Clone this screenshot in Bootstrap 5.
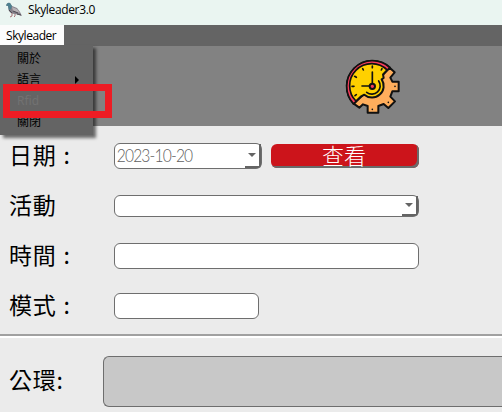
<!DOCTYPE html>
<html lang="zh-Hant">
<head>
<meta charset="utf-8">
<meta name="viewport" content="width=device-width, initial-scale=1">
<title>Skyleader3.0</title>
<link href="https://cdn.jsdelivr.net/npm/bootstrap@5.3.0/dist/css/bootstrap.min.css" rel="stylesheet">
<style>
body{width:502px;height:412px;background:#ebebeb;color:#000;font-family:"Noto Sans","Noto Sans CJK TC",sans-serif;line-height:1}
.title-strip{height:25px;background:#eaf5f1;font-size:12px;padding-left:4px;padding-bottom:5px}
.title-strip span{font-family:"Open Sans","Noto Sans",sans-serif;letter-spacing:-.35px;margin-left:5px}
.menu-strip{height:21px;background:#646464}
.menu-tab{width:64px;height:20px;background:#fcfcfc;font:12px "Open Sans","Noto Sans",sans-serif;letter-spacing:-.45px;padding-left:6px}
.menu-pop{left:0;top:45px;width:93px;height:90px;background:#646464;box-shadow:3px 3px 3px rgba(0,0,0,.55);padding-top:3px;z-index:2;font-size:12px}
.menu-pop>div{height:21px;padding-left:17px;padding-right:14px}
.frame-red{left:3px;top:84px;width:109px;height:34px;border:7px solid #ed1c24;z-index:3}
.menu-pop .off{color:#727272}
.banner{height:80px;background:#828282;padding-left:246px}
.form-area{height:208px;padding:5px 0 0 9px}
.line-row{height:50px}
.cap{width:105px;font:400 23px/1 "Noto Sans CJK TC",sans-serif;letter-spacing:.8px;padding-bottom:4px}
.cap i{font-style:normal;margin-left:7px}
.fld{background:#fff;border:1px solid #6e6e6e;border-radius:6px;height:26px}
.w-s{width:148px}.w-l{width:305px}.w-m{width:145px}
.slim{height:22px}
.datetxt{font:300 18.5px/1 Lato,"Noto Sans",sans-serif;color:#606060;letter-spacing:-1px;padding:0 0 1px 2px;transform:scaleX(.845);transform-origin:0 50%}
.drop{width:16px;align-self:stretch;border-right:2px solid #646464;border-bottom:2px solid #646464;border-bottom-right-radius:3px}
.go{width:148px;height:24px;margin-left:9px;background:#cc141b;color:#fff;border-radius:6px;box-shadow:inset -2px -2px 0 #6a6a6a}
.go span{font:300 22px/1 "Noto Sans CJK TC Light","Noto Sans CJK TC",sans-serif;padding:0 2px 4px 0}
.split{height:4px;background:#fff;border-top:2px solid #a0a0a0}
.foot{height:74px;padding:18px 0 5px 9px}
.foot .cap{width:94px}
.ring-box{height:51px;background:#c8c8c8;border:1px solid #6e6e6e;border-right:0;border-radius:6px 0 0 6px}
</style>
<script src="https://cdn.jsdelivr.net/npm/bootstrap@5.3.0/dist/js/bootstrap.bundle.min.js"></script>
</head>
<body class="position-relative overflow-hidden">
<header class="title-strip d-flex align-items-center">
<svg width="19" height="18" viewBox="0 0 19 18"><path d="M2 4.500Q3 1 6 2L8 5 13 7 16 11 18 15 15 14 11 13Q6 13 4.500 9L4 5Z" fill="#85808a"/><path d="M2 4.500Q3 1 6 2L8 5 7 8 5 9 4 5Z" fill="#4d8090"/><path d="M8 6l5 2 3 4-7-2Z" fill="#b8b2b6"/><path d="M9 10l5 2M13 13l4 1M5 9l3 3" stroke="#514b53" fill="none"/><path d="M8 12v3l-2 1M11 13v2l-1 1" stroke="#a77176" fill="none"/></svg>
<span>Skyleader3.0</span>
</header>
<nav class="menu-strip"><div class="menu-tab d-flex align-items-center">Skyleader</div></nav>
<div class="menu-pop position-absolute">
<div class="d-flex align-items-center">關於</div>
<div class="d-flex align-items-center justify-content-between">語言<svg width="4" height="8"><path d="M0 0l4 4-4 4Z"/></svg></div>
<div class="d-flex align-items-center off">Rfid</div>
<div class="d-flex align-items-center">關閉</div>
</div>
<div class="frame-red position-absolute"></div>
<section class="banner d-flex justify-content-center">
<svg width="80" height="75" viewBox="0 0 240 225" class="mt-1">
<g stroke="#111" stroke-width="6" stroke-linejoin="round" stroke-linecap="round">
<path d="M167 53L182 67 169 83 175 95H194V124H175L169 140 183 154 163 174 149 162 133 168V188H101V168L87 163 76 173 59 161L115 109Z" fill="#ffae5c"/>
<path d="M58.600 161.400A77 77 0 0 1 167.400 52.600L147 73 149 84 143 88A35 35 0 0 1 91 134L80 140Z" fill="#ffd000"/>
<path d="M58.600 161.400A77 77 0 0 1 167.400 52.600L159.700 60.300A66 66 0 0 0 66.300 153.700Z" fill="#f93c5b" stroke-width="5"/>
<path d="M134 93A25 25 0 0 1 98 127" fill="none" stroke-width="5"/>
<path d="M115 66V108H84" fill="none" stroke-width="5"/>
<circle cx="115" cy="109" r="8" fill="#f93c5b"/>
<path d="M115 48v5M86 56l2 4M62 79l5 3M54 109h6M63 137l4-3M144 56l-2 4M115 178v.1M163 157v.1M183 109v.1" fill="none" stroke-width="5"/>
</g></svg>
</section>
<main class="form-area">
<div class="line-row d-flex align-items-center"><div class="cap">日期<i>:</i></div><div class="fld w-s d-flex align-items-center justify-content-between"><span class="datetxt">2023-10-20</span><span class="drop d-flex align-items-center justify-content-center"><svg width="8" height="4"><path d="M0 0h8L4 4Z" fill="#646464"/></svg></span></div><button class="go border-0 p-0 d-flex align-items-center justify-content-center"><span>查看</span></button></div>
<div class="line-row d-flex align-items-center"><div class="cap">活動</div><div class="fld slim w-l d-flex justify-content-end"><span class="drop d-flex align-items-center justify-content-center"><svg width="8" height="4"><path d="M0 0h8L4 4Z" fill="#646464"/></svg></span></div></div>
<div class="line-row d-flex align-items-center"><div class="cap">時間<i>:</i></div><div class="fld w-l"></div></div>
<div class="line-row d-flex align-items-center"><div class="cap">模式<i>:</i></div><div class="fld w-m"></div></div>
</main>
<div class="split"></div>
<section class="foot d-flex align-items-center"><div class="cap">公環:</div><div class="ring-box flex-grow-1"></div></section>
</body>
</html>
